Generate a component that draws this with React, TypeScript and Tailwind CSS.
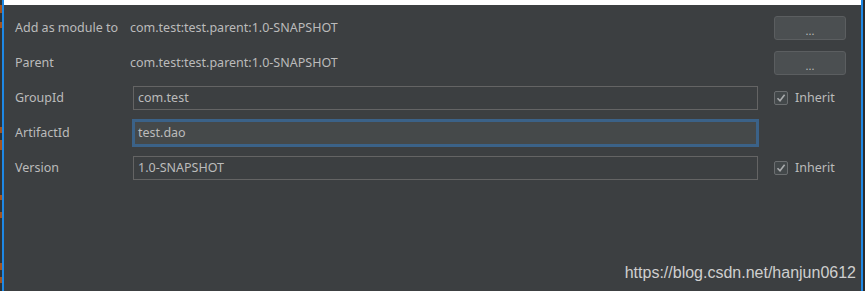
import React from 'react';

const font = { fontFamily: '"Noto Sans", "Open Sans", Arial, sans-serif' };

// little orange fragments of the editor that peek out on the far left
const marks: [number, number][] = [
  [5, 8], [22, 6], [127, 6], [140, 10], [195, 5], [212, 6], [263, 7], [277, 6],
];

const LeftEdge: React.FC = () => {
  let y = 0;
  const parts: React.ReactNode[] = [];
  marks.forEach(([top, h], i) => {
    parts.push(<div key={`g${i}`} style={{ height: top - y }} />);
    parts.push(<div key={`m${i}`} className="bg-[#a4541f]" style={{ height: h }} />);
    y = top + h;
  });
  return (
    <div className="flex h-full">
      <div className="flex w-[2px] flex-col bg-[#2f3234]">{parts}</div>
      <div className="w-[2px] bg-[#1e88e5]" />
    </div>
  );
};

const DotsButton: React.FC = () => (
  <button className="flex h-[24px] w-[72px] items-center justify-center rounded-[3px] border border-[#5b5e60] bg-[#4b4f51] pt-[5px] text-[11px] leading-none text-[#bbbbbb]">
    ...
  </button>
);

const Check: React.FC = () => (
  <div className="flex h-[24px] items-center gap-[7px]">
    <div className="flex h-[14px] w-[14px] items-center justify-center rounded-[2px] border border-[#6b6e70] bg-[#43484a]">
      <svg width="10" height="10" viewBox="0 0 10 10">
        <path d="M1.5 5.2 L4 7.8 L8.6 1.8" fill="none" stroke="#a9abad" strokeWidth="1.6" />
      </svg>
    </div>
    <span className="text-[12.5px] text-[#bbbbbb]">Inherit</span>
  </div>
);

const Field: React.FC<{ value: string; focused?: boolean }> = ({ value, focused }) =>
  focused ? (
    <div className="-mx-[1px] -my-[2px] flex h-[28px] w-[627px] items-center border-[3px] border-[#3b6288] bg-[#45494a] pl-[3px] text-[12.5px] text-[#bbbbbb]">
      {value}
    </div>
  ) : (
    <div className="flex h-[24px] w-[625px] items-center border border-[#646464] pl-[4px] text-[12.5px] text-[#bbbbbb]">
      {value}
    </div>
  );

const Row: React.FC<{ label: string; children: React.ReactNode; right?: React.ReactNode; inset?: boolean }> = ({
  label,
  children,
  right,
  inset,
}) => (
  <div className="flex h-[35px] items-start pt-[5px]">
    <div className="flex h-[24px] w-[126px] items-center pl-[11px] text-[12.5px] text-[#bbbbbb]">{label}</div>
    <div className={`flex h-[24px] w-[642px] items-center ${inset ? 'pl-[3px]' : ''}`}>{children}</div>
    <div className="flex h-[24px] items-center pl-[2px]">{right}</div>
  </div>
);

export default function App() {
  return (
    <div className="flex h-[291px] w-[865px] overflow-hidden bg-[#3c3f41]" style={font}>
      <LeftEdge />
      <div className="flex flex-1 flex-col">
        <div className="h-[5px] bg-white" />
        <div className="mt-[6px] flex flex-col">
          <Row label="Add as module to" right={<DotsButton />}>
            <span className="text-[12.5px] text-[#bbbbbb]">com.test:test.parent:1.0-SNAPSHOT</span>
          </Row>
          <Row label="Parent" right={<DotsButton />}>
            <span className="text-[12.5px] text-[#bbbbbb]">com.test:test.parent:1.0-SNAPSHOT</span>
          </Row>
          <Row label="GroupId" inset right={<Check />}>
            <Field value="com.test" />
          </Row>
          <Row label="ArtifactId" inset>
            <Field value="test.dao" focused />
          </Row>
          <Row label="Version" inset right={<Check />}>
            <Field value="1.0-SNAPSHOT" />
          </Row>
        </div>
        <div className="flex flex-1 items-end justify-end pb-[10px] pr-[5px]">
          <span className="text-[16px] leading-none text-[#cfcfcf]" style={{ fontFamily: '"Liberation Sans", Arial, sans-serif' }}>
            https://blog.csdn.net/hanjun0612
          </span>
        </div>
      </div>
      <div className="w-[2px] bg-[#1e88e5]" />
      <div className="w-[2px] bg-[#2b2b2b]" />
    </div>
  );
}
